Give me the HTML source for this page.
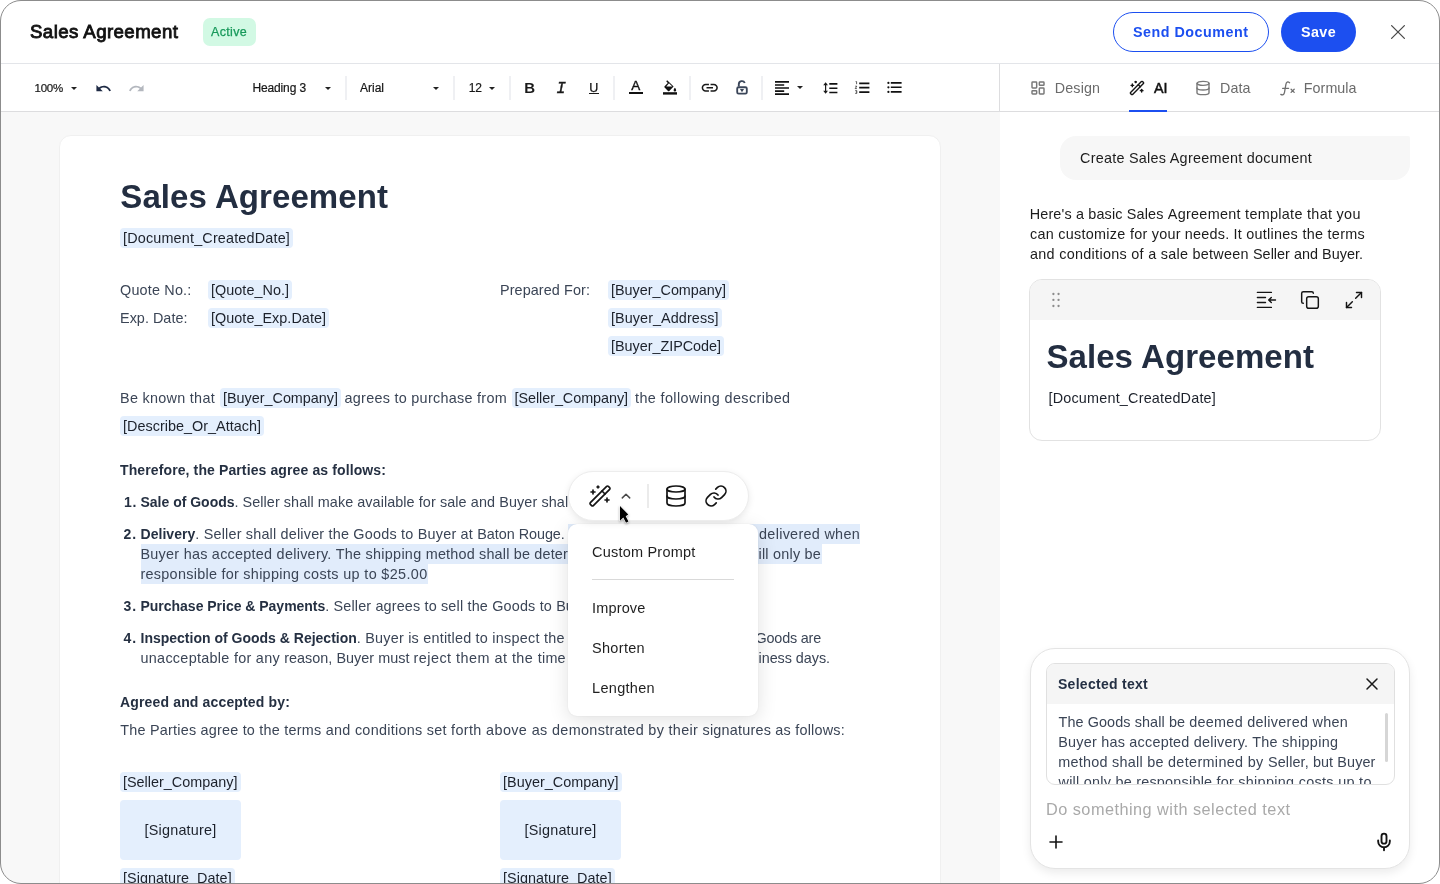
<!DOCTYPE html>
<html lang="en">
<head>
<meta charset="utf-8">
<title>Sales Agreement</title>
<style>
*{box-sizing:border-box;margin:0;padding:0}
html,body{width:1440px;height:884px;overflow:hidden;background:#fff}
body{font-family:"Liberation Sans",sans-serif;color:#1a1a1a;position:relative}
#win{position:absolute;left:0;top:0;width:1440px;height:884px;border-radius:21px;overflow:hidden;background:#fff;will-change:transform}
#frame{position:absolute;left:0;top:0;width:1440px;height:884px;border:1px solid #8c8c8c;border-radius:21px;pointer-events:none;z-index:50}
.abs{position:absolute}
.t{position:absolute;white-space:nowrap;line-height:20px;font-size:14px}
.hl{position:absolute;background:#e5e6ea}
svg{position:absolute;overflow:visible}
/* document */
.d{color:#3b4556;font-size:14.4px}
.b{font-weight:bold;color:#253042;font-size:14px}
.chip{position:absolute;background:#e4effd;border-radius:4px;height:20px}
.ct{color:#1c212b;font-size:14.4px}
.sel{position:absolute;background:#e1ecfb}
.tb{font-size:12px;color:#161616;line-height:16px;-webkit-text-stroke:0.2px #161616}
.tab{font-size:14.3px;color:#6b6b6b;line-height:20px}
.p{color:#1c1c1c;font-size:14.4px}
.mi{font-size:14.5px;color:#1f1f1f}
</style>
</head>
<body>
<div id="win">
<!-- ============ HEADER ============ -->
<div class="abs" style="left:0;top:0;width:1440px;height:63px;background:#fff"></div>
<div class="hl" style="left:0;top:63px;width:1440px;height:1px;background:#e3e5e9"></div>
<div class="t" style="left:30px;top:20px;font-size:18.7px;color:#111;-webkit-text-stroke:0.85px #111;line-height:24px"><span style="letter-spacing:0.398px">Sales Agreement</span></div>
<div class="abs" style="left:203px;top:18px;width:53px;height:28px;border-radius:7px;background:#d2f9e4"></div>
<div class="t" style="left:211px;top:22px;font-size:12.5px;color:#17995a;-webkit-text-stroke:0.25px #17995a;line-height:20px"><span style="letter-spacing:0.326px">Active</span></div>
<div class="abs" style="left:1113px;top:12px;width:156px;height:40px;border-radius:20px;border:1px solid #1c4ff0;background:#fff"></div>
<div class="t" style="left:1133px;top:22px;font-size:14.3px;font-weight:bold;color:#1c4ff0;line-height:20px"><span style="letter-spacing:0.513px">Send Document</span></div>
<div class="abs" style="left:1281px;top:12px;width:75px;height:40px;border-radius:20px;background:#1c4ff0"></div>
<div class="t" style="left:1301px;top:22px;font-size:14.3px;font-weight:bold;color:#fff;line-height:20px"><span style="letter-spacing:0.402px">Save</span></div>
<svg style="left:1390px;top:24px" width="16" height="16" viewBox="0 0 16 16"><path d="M1.6 1.6L14.4 14.4M14.4 1.6L1.6 14.4" stroke="#4d4d4d" stroke-width="1.3" stroke-linecap="round" fill="none"/></svg>

<!-- ============ TOOLBAR ============ -->
<div class="hl" style="left:0;top:111px;width:1440px;height:1px;background:#dddddf"></div>
<div class="hl" style="left:999px;top:64px;width:1px;height:47px;background:#dddddf"></div>
<div class="t tb" style="left:34.5px;top:80px;font-size:11.5px"><span style="letter-spacing:-0.230px">100%</span></div>
<svg style="left:71px;top:86.5px" width="6" height="3" viewBox="0 0 6 3"><path d="M0 0h6L3 3z" fill="#222"/></svg>
<svg style="left:95.3px;top:79.7px" width="17" height="17" viewBox="0 0 24 24"><path fill="#1e2a44" d="M12.5 8c-2.65 0-5.05.99-6.9 2.6L2 7v9h9l-3.62-3.62c1.39-1.16 3.16-1.88 5.12-1.88 3.54 0 6.55 2.31 7.6 5.5l2.37-.78C21.08 11.03 17.15 8 12.5 8z"/></svg>
<svg style="left:127.9px;top:79.7px" width="17" height="17" viewBox="0 0 24 24"><path fill="#b3b7be" d="M18.4 10.6C16.55 8.99 14.15 8 11.5 8c-4.65 0-8.58 3.03-9.96 7.22L3.9 16c1.05-3.19 4.05-5.5 7.6-5.5 1.95 0 3.73.72 5.12 1.88L13 16h9V7l-3.6 3.6z"/></svg>
<div class="t tb" style="left:252.4px;top:80px"><span style="letter-spacing:-0.124px">Heading 3</span></div>
<svg style="left:325px;top:86.5px" width="6" height="3" viewBox="0 0 6 3"><path d="M0 0h6L3 3z" fill="#222"/></svg>
<div class="hl" style="left:345px;top:76px;width:2px;height:24px;background:#eff0f3"></div>
<div class="t tb" style="left:360px;top:80px"><span style="letter-spacing:-0.003px">Arial</span></div>
<svg style="left:433px;top:86.5px" width="6" height="3" viewBox="0 0 6 3"><path d="M0 0h6L3 3z" fill="#222"/></svg>
<div class="hl" style="left:453px;top:76px;width:2px;height:24px;background:#eff0f3"></div>
<div class="t tb" style="left:468.7px;top:80px"><span style="letter-spacing:-0.030px">12</span></div>
<svg style="left:489px;top:86.5px" width="6" height="3" viewBox="0 0 6 3"><path d="M0 0h6L3 3z" fill="#222"/></svg>
<div class="hl" style="left:509px;top:76px;width:2px;height:24px;background:#eff0f3"></div>
<div class="t" style="left:524.3px;top:78px;font-size:15px;font-weight:bold;color:#1a1a1a;line-height:20px">B</div>
<div class="t" style="left:556.3px;top:78.8px;font-size:16.3px;font-style:italic;font-family:'Liberation Mono',monospace;color:#1a1a1a;-webkit-text-stroke:0.35px #1a1a1a;line-height:20px">I</div>
<div class="t" style="left:589.300px;top:77.500px;font-size:12.500px;color:#111;-webkit-text-stroke:0.250px #111;line-height:20px">U</div>
<div class="hl" style="left:589px;top:93px;width:9.5px;height:1px;background:#1a1a1a"></div>
<div class="hl" style="left:613px;top:76px;width:2px;height:24px;background:#eff0f3"></div>
<div class="t" style="left:631.300px;top:76.300px;font-size:13.500px;color:#111;-webkit-text-stroke:0.350px #111;line-height:20px">A</div>
<div class="hl" style="left:629px;top:92px;width:14px;height:2.2px;background:#111"></div>
<!-- fill bucket -->
<svg style="left:663px;top:80.300px" width="14" height="15" viewBox="0 0 14 15"><path d="M3.2 1.2l1-1 6.4 6.4-4.3 4.3a.9.9 0 0 1-1.3 0L1.6 7.5a.9.9 0 0 1 0-1.3L4.8 3z" fill="#111"/><path d="M3.3 6.6h6L6 3.3z" fill="#fff"/><path d="M11.9 7.8s1.3 1.5 1.3 2.4a1.3 1.3 0 0 1-2.6 0c0-.9 1.3-2.4 1.3-2.4z" fill="#111"/><rect x="0" y="12.2" width="14" height="2.4" fill="#111"/></svg>
<div class="hl" style="left:689px;top:76px;width:2px;height:24px;background:#eff0f3"></div>
<!-- link -->
<svg style="left:700.3px;top:78.1px" width="19.5" height="19.5" viewBox="0 0 24 24"><path fill="#1a1a1a" d="M3.9 12c0-1.71 1.39-3.1 3.1-3.1h4V7H7c-2.76 0-5 2.24-5 5s2.24 5 5 5h4v-1.9H7c-1.71 0-3.1-1.39-3.1-3.1zM8 13h8v-2H8v2zm9-6h-4v1.9h4c1.71 0 3.1 1.39 3.1 3.1s-1.39 3.1-3.1 3.1h-4V17h4c2.76 0 5-2.24 5-5s-2.24-5-5-5z"/></svg>
<!-- lock open -->
<svg style="left:735px;top:79px" width="14" height="17" viewBox="0 0 14 17"><rect x="2.2" y="8.2" width="9.600" height="6.400" rx="1.400" fill="none" stroke="#3b4659" stroke-width="1.850"/><path d="M3.800 7.600V5.200a3.100 3.100 0 0 1 5.950-1.200" fill="none" stroke="#3b4659" stroke-width="1.900" stroke-linecap="butt"/><path d="M4.900 10h4.200L7 13.300z" fill="#3b4659"/></svg>
<div class="hl" style="left:761px;top:76px;width:2px;height:24px;background:#eff0f3"></div>
<!-- align -->
<svg style="left:775px;top:81px" width="14" height="14" viewBox="0 0 14 14"><path d="M0 0.900h14M0 4h9.200M0 7h14M0 10.100h9.200M0 13.100h14" stroke="#111" stroke-width="1.650" fill="none"/></svg>
<svg style="left:797px;top:86.3px" width="6" height="3" viewBox="0 0 6 3"><path d="M0 0h6L3 3z" fill="#222"/></svg>
<!-- line spacing -->
<svg style="left:822.5px;top:81.5px" width="15" height="12" viewBox="0 0 15 12"><path d="M6.300 1.900H14.400M6.300 6.200H14.400M6.300 10.500H14.400" stroke="#111" stroke-width="1.600" fill="none"/><path d="M2.6 1.5v9" stroke="#1a1a1a" stroke-width="1.2" fill="none"/><path d="M0.2 3.2L2.6 0.2 5 3.2zM0.2 8.8L2.6 11.8 5 8.8z" fill="#1a1a1a"/></svg>
<!-- numbered list -->
<svg style="left:854.5px;top:81.100px" width="15" height="13" viewBox="0 0 15 13"><path d="M4.200 2.400H14.400M4.200 6.650H14.400M4.200 11.100H14.400" stroke="#111" stroke-width="1.600" fill="none"/><path d="M0.6 0.6h1v2.6M0.2 5.2h1.6L0.2 7.6h1.7M0.2 9.6h1.6v2.8H0.2M0.8 11h1" stroke="#1a1a1a" stroke-width="0.7" fill="none"/></svg>
<!-- bulleted list -->
<svg style="left:886.500px;top:81.200px" width="15" height="13" viewBox="0 0 15 13"><path d="M3.800 1.900H14.600M3.800 6.300H14.600M3.800 10.900H14.600" stroke="#111" stroke-width="1.600" fill="none"/><circle cx="1.400" cy="1.900" r="1.100" fill="#111"/><circle cx="1.400" cy="6.300" r="1.100" fill="#111"/><circle cx="1.400" cy="10.900" r="1.100" fill="#111"/></svg>


<!-- ============ RIGHT TABS ============ -->
<!-- design icon -->
<svg style="left:1030px;top:80px" width="16" height="16" viewBox="0 0 24 24" fill="none" stroke="#787878" stroke-width="2.2" stroke-linecap="round" stroke-linejoin="round"><rect width="7" height="9" x="3" y="3" rx="1"/><rect width="7" height="5" x="14" y="3" rx="1"/><rect width="7" height="9" x="14" y="12" rx="1"/><rect width="7" height="5" x="3" y="16" rx="1"/></svg>
<div class="t tab" style="left:1054.8px;top:78px"><span style="letter-spacing:0.147px">Design</span></div>
<!-- wand icon -->
<svg style="left:1128.7px;top:80px" width="16" height="16" viewBox="0 0 24 24" fill="none" stroke="#141414" stroke-width="2.1" stroke-linecap="round" stroke-linejoin="round"><path d="m21.640 3.640-1.280-1.280a1.210 1.210 0 0 0-1.720 0L2.360 18.640a1.210 1.210 0 0 0 0 1.720l1.280 1.280a1.200 1.200 0 0 0 1.720 0L21.640 5.360a1.200 1.200 0 0 0 0-1.720"/><path d="m14 7 3 3"/><path d="M5 6v4"/><path d="M19 14v4"/><path d="M10 2v2"/><path d="M7 8H3"/><path d="M21 16h-4"/><path d="M11 3H9"/></svg>
<div class="t tab" style="left:1154px;top:78px;color:#111;-webkit-text-stroke:0.5px #111;font-size:14.3px"><span style="letter-spacing:-0.058px">AI</span></div>
<div class="hl" style="left:1129px;top:110px;width:38px;height:2px;background:#1c4ff0"></div>
<!-- data icon -->
<svg style="left:1195px;top:79.800px" width="16" height="16" viewBox="0 0 24 24" fill="none" stroke="#787878" stroke-width="2.1" stroke-linecap="round" stroke-linejoin="round"><ellipse cx="12" cy="5" rx="9" ry="3"/><path d="M3 5v14a9 3 0 0 0 18 0V5"/><path d="M3 12a9 3 0 0 0 18 0"/></svg>
<div class="t tab" style="left:1220px;top:78px"><span style="letter-spacing:0.074px">Data</span></div>
<!-- fx icon -->
<svg style="left:1279.500px;top:80.500px" width="15" height="15" viewBox="0 0 15 15" fill="none" stroke="#6f6f6f" stroke-width="1.3" stroke-linecap="round"><path d="M9.600 1.700C7.800 0.200 6.300 1 5.900 3.300L4.500 11.300C4.100 13.700 2.600 14.500 0.800 13.400"/><path d="M2.600 7.300h6"/><path d="M11.100 8.300l3.100 3.100M14.200 8.300l-3.100 3.100"/></svg>
<div class="t tab" style="left:1303.800px;top:78px"><span style="letter-spacing:0.052px">Formula</span></div>


<!-- ============ EDITOR ============ -->
<div class="abs" style="left:0;top:112px;width:1000px;height:772px;background:#f8f8f8"></div>
<div class="abs" style="left:58.7px;top:134.7px;width:882.3px;height:760px;background:#fff;border-radius:12px;border:1px solid #f0f0f0"></div>
<div class="t b" style="left:120.300px;top:177.300px;font-size:33px;line-height:40px;color:#232e41"><span style="letter-spacing:0.076px">Sales Agreement</span></div>
<div class="chip" style="left:120px;top:228px;width:173px"></div>
<div class="t ct" style="left:123px;top:228px"><span style="letter-spacing:0.173px">[Document_CreatedDate]</span></div>

<div class="t d" style="left:120px;top:280px"><span style="letter-spacing:0.191px">Quote No.:</span></div>
<div class="chip" style="left:208px;top:280px;width:84px"></div>
<div class="t ct" style="left:211px;top:280px"><span style="letter-spacing:0.036px">[Quote_No.]</span></div>
<div class="t d" style="left:120px;top:308px"><span style="letter-spacing:0.030px">Exp. Date:</span></div>
<div class="chip" style="left:208px;top:308px;width:121px"></div>
<div class="t ct" style="left:211px;top:308px"><span style="letter-spacing:0.037px">[Quote_Exp.Date]</span></div>

<div class="t d" style="left:500px;top:280px"><span style="letter-spacing:0.093px">Prepared For:</span></div>
<div class="chip" style="left:608px;top:280px;width:121px"></div>
<div class="t ct" style="left:611px;top:280px"><span style="letter-spacing:-0.013px">[Buyer_Company]</span></div>
<div class="chip" style="left:608px;top:308px;width:113.5px"></div>
<div class="t ct" style="left:611px;top:308px"><span style="letter-spacing:0.074px">[Buyer_Address]</span></div>
<div class="chip" style="left:608px;top:336px;width:116px"></div>
<div class="t ct" style="left:611px;top:336px"><span style="letter-spacing:-0.026px">[Buyer_ZIPCode]</span></div>

<div class="t d" style="left:120px;top:388px"><span style="letter-spacing:0.292px">Be known that</span></div>
<div class="chip" style="left:220px;top:388px;width:121px"></div>
<div class="t ct" style="left:223px;top:388px"><span style="letter-spacing:-0.013px">[Buyer_Company]</span></div>
<div class="t d" style="left:344.5px;top:388px"><span style="letter-spacing:0.283px">agrees to purchase from</span></div>
<div class="chip" style="left:511.5px;top:388px;width:119.5px"></div>
<div class="t ct" style="left:514.5px;top:388px"><span style="letter-spacing:-0.056px">[Seller_Company]</span></div>
<div class="t d" style="left:635px;top:388px"><span style="letter-spacing:0.395px">the following described</span></div>
<div class="chip" style="left:120px;top:416px;width:144px"></div>
<div class="t ct" style="left:123px;top:416px"><span style="letter-spacing:0.021px">[Describe_Or_Attach]</span></div>

<div class="t b" style="left:120px;top:460px"><span style="letter-spacing:0.114px">Therefore, the Parties agree as follows:</span></div>

<!-- selection highlight -->
<div class="sel" style="left:568px;top:524px;width:292px;height:20px"></div>
<div class="sel" style="left:141px;top:544px;width:681px;height:20px"></div>
<div class="sel" style="left:141px;top:564px;width:287px;height:20px"></div>

<div class="t b" style="left:124px;top:492px"><span style="letter-spacing:0.656px">1.</span></div>
<div class="t d" style="left:140.5px;top:492px"><span class="b" style="letter-spacing:-0.010px">Sale of Goods</span><span style="letter-spacing:0.061px">. Seller shall make available </span><span style="letter-spacing:0.100px">for sale and Buyer shal</span><span style="margin-left:2px">l purchase the Goods.</span></div>

<div class="t b" style="left:123.5px;top:524px"><span style="letter-spacing:0.906px">2.</span></div>
<div class="t d" style="left:140.5px;top:524px"><span class="b" style="letter-spacing:0.039px">Delivery</span><span style="letter-spacing:0.193px">. Seller shall deliver the </span><span style="letter-spacing:0.222px">Goods to Buyer at </span><span style="letter-spacing:-0.042px">Baton Rouge. </span><span style="letter-spacing:0.211px"> The Goods shall be deemed </span><span style="letter-spacing:0.299px">delivered when</span></div>
<div class="t d" style="left:140.5px;top:544px"><span style="letter-spacing:0.258px">Buyer has accepted </span><span style="letter-spacing:0.280px">delivery. The shipping </span><span style="letter-spacing:0.185px">method shall be deter</span><span style="letter-spacing:0.290px">mined by Seller, but Buyer w</span><span style="letter-spacing:0.227px">ill only be</span></div>
<div class="t d" style="left:140.5px;top:564px"><span style="letter-spacing:0.280px">responsible for shipping </span><span style="letter-spacing:0.355px">costs up to $25.00</span></div>

<div class="t b" style="left:123.5px;top:596px"><span style="letter-spacing:0.906px">3.</span></div>
<div class="t d" style="left:140.5px;top:596px"><span class="b" style="letter-spacing:-0.017px">Purchase Price &amp; Payments</span><span style="letter-spacing:0.153px">. Seller agrees to </span><span style="letter-spacing:0.178px">sell the Goods to </span><span>Buyer for $2,500.00.</span></div>

<div class="t b" style="left:123.5px;top:628px"><span style="letter-spacing:0.906px">4.</span></div>
<div class="t d" style="left:140.5px;top:628px"><span class="b" style="letter-spacing:0.002px">Inspection of Goods &amp; Rejection</span><span style="letter-spacing:0.222px">. Buyer is entitled to </span><span style="letter-spacing:0.258px">inspect the </span><span style="letter-spacing:0.414px">Goods upon delivery. If the </span><span style="letter-spacing:-0.189px">Goods are</span></div>
<div class="t d" style="left:140.5px;top:648px"><span style="letter-spacing:0.290px">unacceptable for any </span><span style="letter-spacing:0.027px">reason, Buyer must </span><span style="letter-spacing:0.480px">reject them at the </span><span style="letter-spacing:0.203px">time</span><span style="letter-spacing:0.940px"> of delivery or within 5 bus</span><span style="letter-spacing:-0.045px">iness days.</span></div>

<div class="t b" style="left:120px;top:692px"><span style="letter-spacing:0.152px">Agreed and accepted by:</span></div>
<div class="t d" style="left:120.3px;top:720px"><span style="letter-spacing:0.220px">The Parties agree to the </span><span style="letter-spacing:0.273px">terms and conditions set </span><span style="letter-spacing:0.386px">forth above as </span><span style="letter-spacing:0.332px">demonstrated by their </span><span style="letter-spacing:0.224px">signatures as follows:</span></div>

<div class="chip" style="left:120px;top:772px;width:121px"></div>
<div class="t ct" style="left:123px;top:772px"><span style="letter-spacing:0.007px">[Seller_Company]</span></div>
<div class="chip" style="left:500px;top:772px;width:121.5px"></div>
<div class="t ct" style="left:503px;top:772px"><span style="letter-spacing:0.021px">[Buyer_Company]</span></div>
<div class="chip" style="left:120px;top:800px;width:121px;height:60px"></div>
<div class="t ct" style="left:144.5px;top:820px"><span style="letter-spacing:0.217px">[Signature]</span></div>
<div class="chip" style="left:500px;top:800px;width:121px;height:60px"></div>
<div class="t ct" style="left:524.5px;top:820px"><span style="letter-spacing:0.217px">[Signature]</span></div>
<div class="chip" style="left:120px;top:868px;width:114.7px"></div>
<div class="t ct" style="left:123px;top:868px"><span style="letter-spacing:0.043px">[Signature_Date]</span></div>
<div class="chip" style="left:500px;top:868px;width:114.7px"></div>
<div class="t ct" style="left:503px;top:868px"><span style="letter-spacing:0.043px">[Signature_Date]</span></div>


<!-- ============ FLOATING ============ -->
<!-- dropdown -->
<div class="abs" style="left:568px;top:524px;width:190px;height:192px;border-radius:9px;background:#fff;box-shadow:0 4px 20px rgba(0,0,0,.12),0 0 2px rgba(0,0,0,.07)"></div>
<div class="t mi" style="left:592px;top:542px"><span style="letter-spacing:0.213px">Custom Prompt</span></div>
<div class="hl" style="left:592px;top:579px;width:142px;height:1px;background:#d9d9d9"></div>
<div class="t mi" style="left:592px;top:598px"><span style="letter-spacing:0.158px">Improve</span></div>
<div class="t mi" style="left:592px;top:638px"><span style="letter-spacing:0.315px">Shorten</span></div>
<div class="t mi" style="left:592px;top:678px"><span style="letter-spacing:0.314px">Lengthen</span></div>
<!-- pill toolbar -->
<div class="abs" style="left:567.5px;top:471px;width:181px;height:49.5px;border-radius:25px;background:#fff;border:1px solid #ededed;box-shadow:0 2px 7px rgba(0,0,0,.09)"></div>
<svg style="left:588px;top:484px" width="24" height="24" viewBox="0 0 24 24" fill="none" stroke="#141414" stroke-width="1.65" stroke-linecap="round" stroke-linejoin="round"><path d="m21.64 3.64-1.28-1.28a1.21 1.21 0 0 0-1.72 0L2.36 18.64a1.21 1.21 0 0 0 0 1.72l1.28 1.28a1.2 1.2 0 0 0 1.72 0L21.64 5.36a1.2 1.2 0 0 0 0-1.72"/><path d="m14 7 3 3"/><path d="M5 6v4"/><path d="M19 14v4"/><path d="M10 2v2"/><path d="M7 8H3"/><path d="M21 16h-4"/><path d="M11 3H9"/></svg>
<svg style="left:621px;top:492px" width="10" height="8" viewBox="0 0 10 8" fill="none" stroke="#4a4a4a" stroke-width="1.5" stroke-linecap="round" stroke-linejoin="round"><path d="M1.300 5.900L5 2.300l3.700 3.600"/></svg>
<div class="hl" style="left:647.2px;top:484px;width:1.6px;height:24px;background:#ebebeb"></div>
<svg style="left:664px;top:484px" width="24" height="24" viewBox="0 0 24 24" fill="none" stroke="#141414" stroke-width="1.7" stroke-linecap="round" stroke-linejoin="round"><ellipse cx="12" cy="5" rx="9" ry="3"/><path d="M3 5v14a9 3 0 0 0 18 0V5"/><path d="M3 12a9 3 0 0 0 18 0"/></svg>
<svg style="left:704px;top:484px" width="24" height="24" viewBox="0 0 24 24" fill="none" stroke="#141414" stroke-width="1.7" stroke-linecap="round" stroke-linejoin="round"><path d="M10 13a5 5 0 0 0 7.540.540l3-3a5 5 0 0 0-7.070-7.070l-1.720 1.710"/><path d="M14 11a5 5 0 0 0-7.540-.540l-3 3a5 5 0 0 0 7.070 7.070l1.710-1.710"/></svg>
<!-- cursor -->
<svg style="left:620px;top:505.8px;z-index:40" width="12" height="20" viewBox="0 0 12 20"><path d="M0 0L0 14.700L3.300 11.600L6 16.700L8.500 15.500L5.700 10.300L8.300 8.600Z" fill="#000" stroke="#fff" stroke-width="1.100" stroke-linejoin="round" paint-order="stroke" style="filter:drop-shadow(0.500px 1px 0.800px rgba(0,0,0,.35))"/></svg>


<!-- ============ AI PANEL ============ -->
<!-- user bubble -->
<div class="abs" style="left:1060px;top:136px;width:350px;height:44px;background:#f7f7f7;border-radius:16px 2px 16px 16px"></div>
<div class="t p" style="left:1080px;top:148px"><span style="letter-spacing:0.259px">Create Sales Agreement document</span></div>
<!-- response -->
<div class="t p" style="left:1029.7px;top:204px"><span style="letter-spacing:0.160px">Here's a basic Sales </span><span style="letter-spacing:0.295px">Agreement template </span><span style="letter-spacing:0.323px">that you</span></div>
<div class="t p" style="left:1030px;top:224px"><span style="letter-spacing:0.279px">can customize for </span><span style="letter-spacing:0.213px">your needs. It </span><span style="letter-spacing:0.289px">outlines the terms</span></div>
<div class="t p" style="left:1030px;top:244px"><span style="letter-spacing:0.299px">and conditions of a </span><span style="letter-spacing:0.261px">sale between </span><span style="letter-spacing:0.023px">Seller and Buyer.</span></div>
<!-- card -->
<div class="abs" style="left:1029px;top:279px;width:352px;height:162px;border:1px solid #e2e2e2;border-radius:13px;background:#fff;overflow:hidden"><div style="height:40px;background:#f5f5f5"></div></div>
<svg style="left:1050px;top:290px" width="12" height="20" viewBox="0 0 12 20" fill="#8c8c8c"><circle cx="3.4" cy="4" r="1.15"/><circle cx="8.55" cy="4" r="1.15"/><circle cx="3.4" cy="9.950" r="1.15"/><circle cx="8.55" cy="9.950" r="1.15"/><circle cx="3.4" cy="16" r="1.15"/><circle cx="8.55" cy="16" r="1.15"/></svg>
<svg style="left:1256px;top:290px" width="20" height="20" viewBox="0 0 20 20" fill="none" stroke="#141414" stroke-width="1.4" stroke-linecap="round" stroke-linejoin="round"><path d="M1.400 2.400H15.400M1.400 7.500H9.500M1.400 12.500H9.500M1.400 17.400H15.400"/><path d="M19.500 10H12.800M15.300 7.400L12.700 10l2.600 2.600"/></svg>
<svg style="left:1300.3px;top:290.4px" width="20" height="20" viewBox="0 0 24 24" fill="none" stroke="#141414" stroke-width="1.75" stroke-linecap="round" stroke-linejoin="round"><rect x="8" y="8" width="14" height="14" rx="2.500" ry="2.500"/><path d="M4 16c-1.100 0-2-.900-2-2V4c0-1.100.900-2 2-2h10c1.100 0 2 .900 2 2"/></svg>
<svg style="left:1344px;top:290px" width="20" height="20" viewBox="0 0 24 24" fill="none" stroke="#141414" stroke-width="1.75" stroke-linecap="round" stroke-linejoin="round"><path d="M15 3h6v6"/><path d="M9 21H3v-6"/><path d="M21 3l-7 7"/><path d="M3 21l7-7"/></svg>
<div class="t b" style="left:1046.400px;top:337.300px;font-size:33px;line-height:40px;color:#232e41"><span style="letter-spacing:0.076px">Sales Agreement</span></div>
<div class="t ct" style="left:1048.5px;top:388px"><span style="letter-spacing:0.196px">[Document_CreatedDate]</span></div>

<!-- input box -->
<div class="abs" style="left:1030px;top:648px;width:380px;height:221px;border:1px solid #e4e4e4;border-radius:25px;background:#fff;box-shadow:0 4px 10px rgba(0,0,0,.08)"></div>
<div class="abs" style="left:1045.5px;top:663px;width:349px;height:121.5px;border:1px solid #e0e0e0;border-radius:9px;background:#fff;overflow:hidden">
  <div style="height:40px;background:#f5f5f5"></div>
  <div class="t d" style="left:12px;top:48px"><span style="letter-spacing:0.100px">The Goods shall be </span><span style="letter-spacing:0.288px">deemed delivered </span><span style="letter-spacing:0.273px">when</span></div>
  <div class="t d" style="left:11.8px;top:68px"><span style="letter-spacing:0.226px">Buyer has accepted </span><span style="letter-spacing:0.224px">delivery. The </span><span style="letter-spacing:0.361px">shipping</span></div>
  <div class="t d" style="left:11.8px;top:88px"><span style="letter-spacing:0.256px">method shall be </span><span style="letter-spacing:0.343px">determined by </span><span style="letter-spacing:0.112px">Seller, but Buyer</span></div>
  <div class="t d" style="left:12px;top:108px"><span style="letter-spacing:0.255px">will only be </span><span style="letter-spacing:0.226px">responsible for </span><span style="letter-spacing:0.315px">shipping costs up to</span></div>
  <div class="abs" style="left:338px;top:48.5px;width:3.5px;height:49px;border-radius:2px;background:#d6d6d6"></div>
</div>
<div class="t b" style="left:1058px;top:674px;color:#243044"><span style="letter-spacing:0.279px">Selected text</span></div>
<svg style="left:1365px;top:677px" width="14" height="14" viewBox="0 0 14 14"><path d="M2 2l10 10M12 2l-10 10" stroke="#1a1a1a" stroke-width="1.500" stroke-linecap="round" fill="none"/></svg>
<div class="t" style="left:1046px;top:797.5px;font-size:16.3px;line-height:22px;color:#a9a9a9"><span style="letter-spacing:0.472px">Do something with selected text</span></div>
<svg style="left:1048px;top:834px" width="16" height="16" viewBox="0 0 16 16"><path d="M8 2v12M2 8h12" stroke="#141414" stroke-width="1.600" stroke-linecap="round" fill="none"/></svg>
<svg style="left:1374px;top:832px" width="20" height="20" viewBox="0 0 24 24" fill="none" stroke="#141414" stroke-width="2.250" stroke-linecap="round" stroke-linejoin="round"><rect x="9" y="2" width="6" height="12" rx="3"/><path d="M19 10v1.500a7 7 0 0 1-14 0V10"/><path d="M12 18.500V22"/></svg>


</div>
<div id="frame"></div>
</body>
</html>
